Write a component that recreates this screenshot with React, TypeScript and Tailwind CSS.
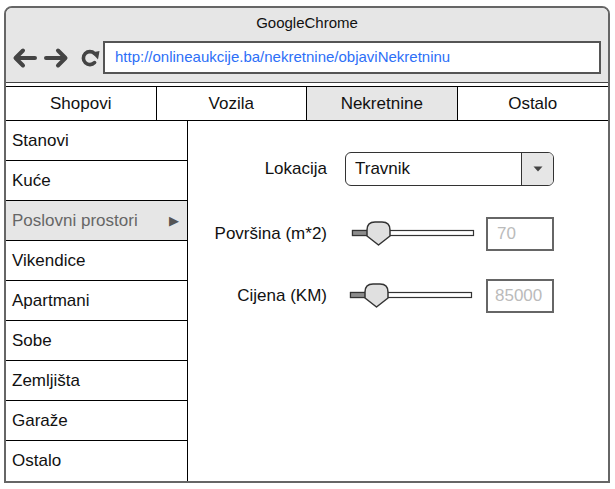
import React from "react";

const font = { fontFamily: '"Liberation Sans", Arial, sans-serif' };

function Slider() {
  return (
    <svg width="133" height="34" viewBox="0 0 133 34" className="block">
      <rect x="7.5" y="13.5" width="121" height="5" fill="#ffffff" stroke="#333" strokeWidth="1.2" />
      <rect x="7.5" y="13.5" width="16" height="5" fill="#8c8c8c" stroke="#333" strokeWidth="1.2" />
      <path
        d="M22 13 Q22 5 30 5 L37 5 Q45 5 45 13 L45 19 L33.5 28 L22 19 Z"
        fill="#e0e0e0"
        stroke="#333"
        strokeWidth="1.5"
        strokeLinejoin="round"
      />
    </svg>
  );
}

export default function App() {
  const cats = [
    "Stanovi",
    "Kuće",
    "Poslovni prostori",
    "Vikendice",
    "Apartmani",
    "Sobe",
    "Zemljišta",
    "Garaže",
    "Ostalo",
  ];
  const tabs = ["Shopovi", "Vozila", "Nekretnine", "Ostalo"];
  return (
    <div className="w-[615px] h-[489px] bg-white pt-[6px] pl-[4px]" style={font}>
      <div className="w-[606px] h-[477px] border-2 border-[#666] rounded-t-[8px] flex flex-col bg-white overflow-hidden">
        {/* header */}
        <div className="h-[75px] bg-[#e6e6e6] border-b border-[#444] flex flex-col shrink-0">
          <div className="h-[31px] flex items-center justify-center text-[15px] text-[#111]">GoogleChrome</div>
          <div className="flex items-start mt-[2px]">
            <div className="w-[97px] h-[33px] flex items-center">
              <svg width="97" height="33" viewBox="0 0 97 33">
                <g stroke="#444" strokeWidth="4" strokeLinecap="round" strokeLinejoin="round" fill="none">
                  <path d="M10 17 L29 17 M17 9.5 L9.5 17 L17 24.5" />
                  <path d="M40 17 L59 17 M52 9.5 L59.5 17 L52 24.5" />
                </g>
                <path d="M88.6 21.6 A6.5 6.5 0 1 1 88.5 12.5" stroke="#444" strokeWidth="3.6" fill="none" strokeLinecap="round" />
                <path d="M85.5 11.5 L93.5 10 L92 18.5 Z" fill="#444" />
              </svg>
            </div>
            <div className="w-[498px] h-[33px] border-2 border-[#555] bg-white flex items-center pl-[10px] text-[15px] text-[#2d6ff7]">
              http://onlineaukcije.ba/nekretnine/objaviNekretninu
            </div>
          </div>
        </div>
        <div className="h-[3px] shrink-0" />
        {/* tabs */}
        <div className="grid grid-cols-4 h-[35px] border-y border-black shrink-0">
          {tabs.map((t, i) => (
            <div
              key={t}
              className={`flex items-center justify-center text-[17px] text-[#111] ${i < 3 ? "border-r border-black" : ""} ${t === "Nekretnine" ? "bg-[#e6e6e6]" : ""}`}
            >
              {t}
            </div>
          ))}
        </div>
        {/* body */}
        <div className="flex flex-1 min-h-0">
          <div className="w-[182px] border-r border-black flex flex-col shrink-0">
            {cats.map((c, i) => (
              <div
                key={c}
                className={`h-[40px] shrink-0 flex items-center pl-[6px] pr-[8px] text-[17px] ${i < cats.length - 1 ? "border-b border-black" : ""} ${c === "Poslovni prostori" ? "bg-[#e6e6e6] text-[#666]" : "text-[#111]"}`}
              >
                <span className="flex-1">{c}</span>
                {c === "Poslovni prostori" && <span className="text-[13px] text-[#555]">▶</span>}
              </div>
            ))}
          </div>
          <div className="flex-1 flex flex-col pt-[31px]">
            <div className="flex items-center h-[34px]">
              <div className="w-[139px] text-right text-[17px] text-[#111]">Lokacija</div>
              <div className="ml-[18px] w-[209px] h-[34px] border-[1.5px] border-[#333] rounded-[6px] flex overflow-hidden">
                <div className="flex-1 flex items-center pl-[9px] text-[17px] text-[#111]">Travnik</div>
                <div className="w-[32px] border-l border-[#333] bg-[#e6e6e6] flex items-center justify-center">
                  <svg width="10" height="6" viewBox="0 0 10 6">
                    <path d="M0.5 0.5 L9.5 0.5 L5 5.5 Z" fill="#444" />
                  </svg>
                </div>
              </div>
            </div>
            <div className="flex items-center h-[34px] mt-[31px]">
              <div className="w-[139px] text-right text-[17px] text-[#111]">Površina (m*2)</div>
              <div className="ml-[18px]">
                <Slider />
              </div>
              <div className="ml-[8px] w-[68px] h-[34px] border-2 border-[#666] flex items-center pl-[9px] text-[17px] text-[#bbb]">70</div>
            </div>
            <div className="flex items-center h-[34px] mt-[28px]">
              <div className="w-[139px] text-right text-[17px] text-[#111]">Cijena (KM)</div>
              <div className="ml-[16px]">
                <Slider />
              </div>
              <div className="ml-[10px] w-[68px] h-[34px] border-2 border-[#666] flex items-center pl-[7px] text-[17px] text-[#bbb]">85000</div>
            </div>
          </div>
        </div>
      </div>
    </div>
  );
}
